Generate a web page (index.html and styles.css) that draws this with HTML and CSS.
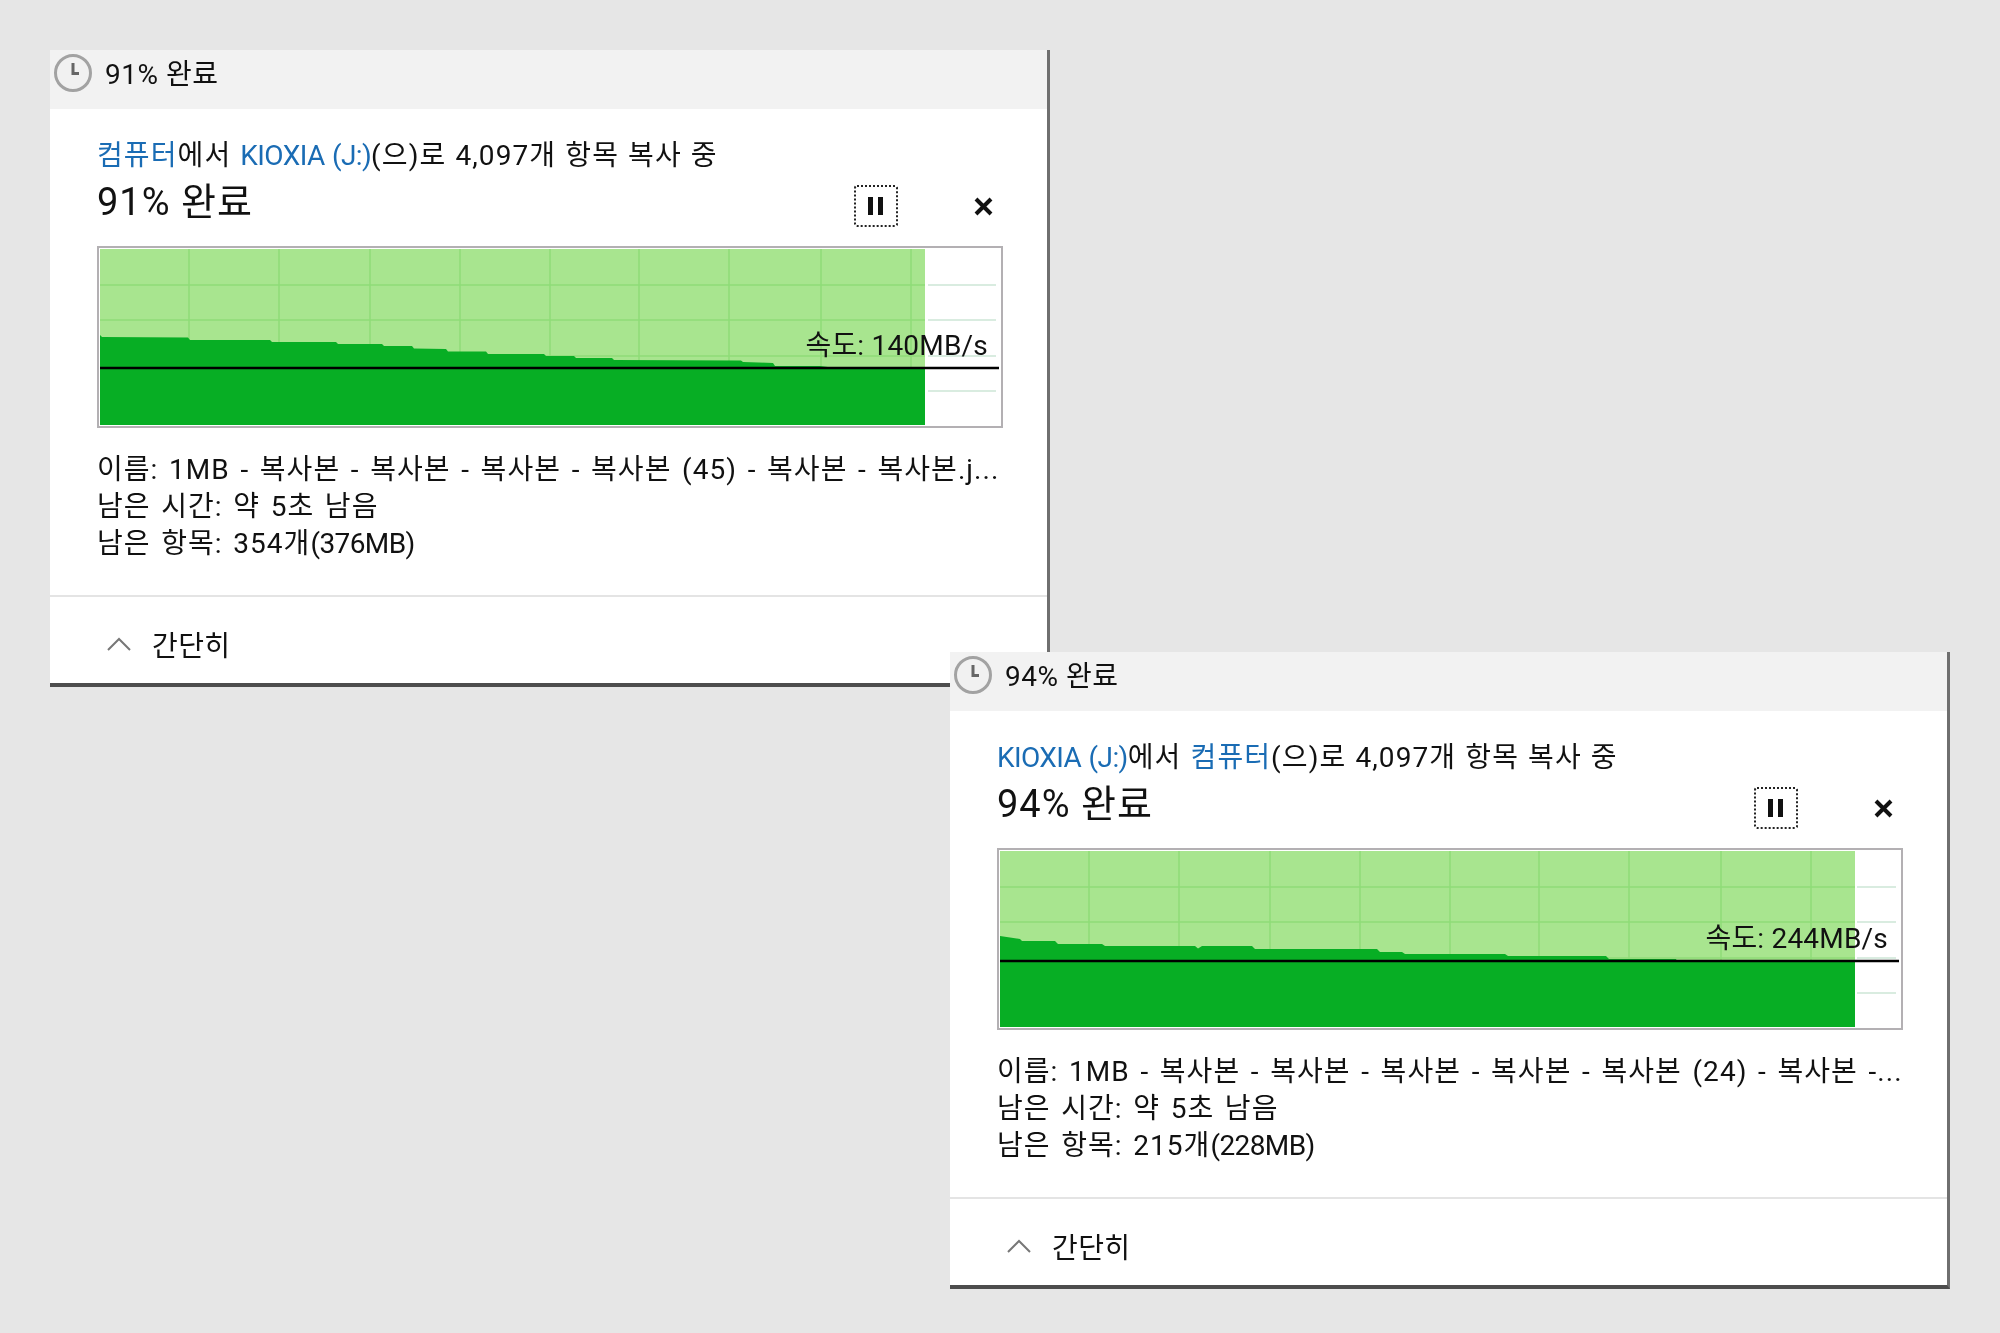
FILE: index.html
```html
<!DOCTYPE html>
<html lang="ko">
<head>
<meta charset="utf-8">
<title>복사 진행률</title>
<link rel="stylesheet" href="styles.css">
</head>
<body>
<section class="window window-a">
  <header class="titlebar">
    <svg class="clock" viewBox="0 0 40 40"><circle class="clock-face" cx="20" cy="20" r="17.5"/><path class="clock-hand" d="M20 10V20.5H26"/></svg>
    <span class="title-text">91% 완료</span>
  </header>
  <div class="main">
    <p class="summary"><a class="link">컴퓨터</a>에서 <a class="link latin">KIOXIA (J:)</a>(으)로 4,097개 항목 복사 중</p>
    <div class="heading-row">
      <h1 class="heading">91% 완료</h1>
      <div class="controls">
        <button class="pause" aria-label="일시 중지"><svg viewBox="0 0 18 18"><path d="M3.5 0V18M13.5 0V18"/></svg></button>
        <button class="close" aria-label="취소"><svg viewBox="0 0 19 19"><path d="M2 2L17 17M17 2L2 17"/></svg></button>
      </div>
    </div>
    <div class="graph">
      <svg class="plot" viewBox="99 248 902 178">
        <rect class="fill-light" x="100" y="249" width="825" height="176"/>
        <path class="grid-in" d="M189 249V370M279 249V370M370 249V370M460 249V370M550 249V370M639 249V370M729 249V370M821 249V370M911 249V370M100 285H925M100 320H925M100 356H925"/>
        <path class="grid-out" d="M928 285H996M928 320H996M928 356H996M928 391H996"/>
        <polygon class="fill-dark" points="100,335 102,337 188,337.5 190,340 270,340 272,342 336,342 338,344 382,344 384,346 412,346 414,348.5 446,349 448,351.5 486,351.5 488,354 544,354 546,356 574,356 576,358 612,358 614,360 741,360.5 743,362 773,363 775,366 820,366 832,367.5 925,367.5 925,425 100,425"/>
        <path class="avg" d="M100 368H999"/>
      </svg>
      <span class="speed speed-a">속도: 140MB/s</span>
    </div>
    <ul class="details">
      <li>이름: 1MB - 복사본 - 복사본 - 복사본 - 복사본 (45) - 복사본 - 복사본.j...</li>
      <li>남은 시간: 약 5초 남음</li>
      <li>남은 항목: 354개<span class="latin">(376MB)</span></li>
    </ul>
  </div>
  <footer class="footer">
    <svg class="chevron" viewBox="0 0 24 14"><path d="M1 13L12 2L23 13"/></svg>
    <span class="footer-text">간단히</span>
  </footer>
</section>

<section class="window window-b">
  <header class="titlebar">
    <svg class="clock" viewBox="0 0 40 40"><circle class="clock-face" cx="20" cy="20" r="17.5"/><path class="clock-hand" d="M20 10V20.5H26"/></svg>
    <span class="title-text">94% 완료</span>
  </header>
  <div class="main">
    <p class="summary"><a class="link latin">KIOXIA (J:)</a>에서 <a class="link">컴퓨터</a>(으)로 4,097개 항목 복사 중</p>
    <div class="heading-row">
      <h1 class="heading">94% 완료</h1>
      <div class="controls">
        <button class="pause" aria-label="일시 중지"><svg viewBox="0 0 18 18"><path d="M3.5 0V18M13.5 0V18"/></svg></button>
        <button class="close" aria-label="취소"><svg viewBox="0 0 19 19"><path d="M2 2L17 17M17 2L2 17"/></svg></button>
      </div>
    </div>
    <div class="graph">
      <svg class="plot" viewBox="99 248 902 178">
        <rect class="fill-light" x="100" y="249" width="855" height="176"/>
        <path class="grid-in" d="M189 249V360M279 249V360M370 249V360M460 249V360M550 249V360M639 249V360M729 249V360M821 249V360M911 249V360M100 285H955M100 320H955M100 356H955"/>
        <path class="grid-out" d="M957 285H996M957 320H996M957 356H996M957 391H996"/>
        <polygon class="fill-dark" points="100,334 120,337 122,339 155,339 158,342 202,342 205,344 295,344 298,346.5 302,344 352,344 355,347 477,347 480,350 502,350 505,352 605,352 608,354 706,354 709,357 776,357 777,359 955,359 955,425 100,425"/>
        <path class="avg" d="M100 359H999"/>
      </svg>
      <span class="speed speed-b">속도: 244MB/s</span>
    </div>
    <ul class="details">
      <li>이름: 1MB - 복사본 - 복사본 - 복사본 - 복사본 - 복사본 (24) - 복사본 -...</li>
      <li>남은 시간: 약 5초 남음</li>
      <li>남은 항목: 215개<span class="latin">(228MB)</span></li>
    </ul>
  </div>
  <footer class="footer">
    <svg class="chevron" viewBox="0 0 24 14"><path d="M1 13L12 2L23 13"/></svg>
    <span class="footer-text">간단히</span>
  </footer>
</section>
</body>
</html>
```

FILE: styles.css
```css
* { box-sizing: border-box; }

html, body {
  margin: 0;
  height: 1333px;
  overflow: hidden;
}

body {
  position: relative;
  background: #e6e6e6;
  color: #111;
  font-family: Roboto, "Noto Sans CJK KR", sans-serif;
  font-size: 28px;
}

.window {
  position: absolute;
  display: flex;
  flex-direction: column;
  width: 1000px;
  height: 637px;
  background: #fff;
  border-right: 3px solid #6f6f6f;
  border-bottom: 4px solid #4d4d4d;
  filter: blur(0.4px);
}

.window-a { left: 50px; top: 50px; }
.window-b { left: 950px; top: 652px; }

.titlebar {
  display: flex;
  align-items: flex-start;
  gap: 12px;
  height: 59px;
  padding: 3px 0 0 3px;
  background: #f2f2f2;
  line-height: 38px;
}

.title-text {
  margin-top: 3px;
  letter-spacing: 0.5px;
}

.clock { width: 40px; height: 40px; flex: none; }
.clock-face { fill: #f1f1f1; stroke: #a2a2a2; stroke-width: 3; }
.clock-hand { fill: none; stroke: #666; stroke-width: 3; }

.main { flex: 1; padding: 27px 44px 0 47px; }

.summary {
  margin: 0;
  height: 34px;
  line-height: 39px;
  letter-spacing: 1.1px;
  word-spacing: 1px;
  white-space: nowrap;
}

.link { color: #1a6cb4; }
.latin { letter-spacing: -0.6px; }

.heading-row {
  display: flex;
  justify-content: space-between;
  height: 76px;
}

.heading {
  margin: 0;
  font-size: 38px;
  font-weight: 400;
  line-height: 65px;
  letter-spacing: 1px;
}

.controls {
  display: flex;
  align-items: center;
  gap: 76px;
  height: 42px;
  margin-top: 15px;
  padding-right: 10px;
}

.pause, .close {
  display: flex;
  align-items: center;
  justify-content: center;
  padding: 0;
  background: none;
  border: none;
}

.pause {
  width: 44px;
  height: 42px;
  border: 2px dotted #222;
  border-radius: 3px;
}

.pause svg { width: 18px; height: 18px; }
.pause path { stroke: #111; stroke-width: 5; fill: none; }

.close { width: 19px; height: 19px; }
.close svg { width: 19px; height: 19px; }
.close path { stroke: #111; stroke-width: 4; fill: none; }

.graph {
  position: relative;
  width: 906px;
  height: 182px;
  border: 2px solid #b3b0b3;
  background: #fff;
}

.plot { display: block; width: 902px; height: 178px; }
.fill-light { fill: #a8e58f; }
.fill-dark { fill: #07ae24; }
.grid-in { stroke: #8edc78; stroke-width: 1.5; fill: none; }
.grid-out { stroke: #cde6d6; stroke-width: 1.5; fill: none; }
.avg { stroke: #000; stroke-width: 2.5; fill: none; }

.speed {
  position: absolute;
  right: 13px;
  line-height: 34px;
  letter-spacing: 0.2px;
  white-space: nowrap;
}

.speed-a { top: 81px; }
.speed-b { top: 72px; }

.details {
  margin: 23px 0 0;
  padding: 0;
  list-style: none;
  line-height: 37px;
  letter-spacing: 1.05px;
  word-spacing: 2.6px;
  white-space: nowrap;
}

.footer {
  display: flex;
  align-items: center;
  gap: 21px;
  height: 88px;
  padding: 7px 0 0 57px;
  border-top: 2px solid #e4e4e4;
}

.footer-text { letter-spacing: 0.4px; }

.chevron { width: 24px; height: 14px; flex: none; }
.chevron path { fill: none; stroke: #777; stroke-width: 2; }
```
